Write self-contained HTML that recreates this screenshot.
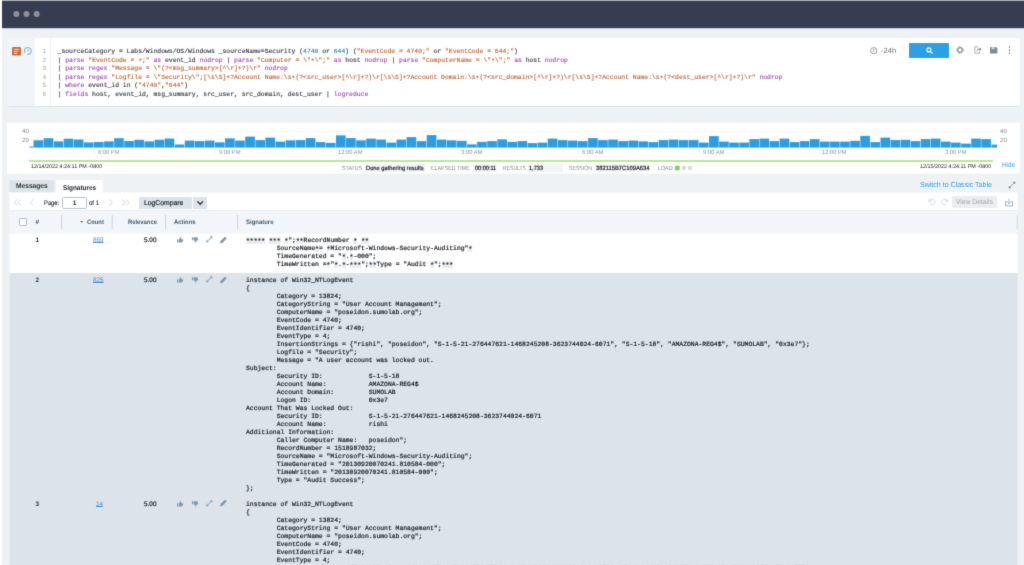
<!DOCTYPE html>
<html lang="en"><head><meta charset="utf-8"><title>Sumo Logic - LogReduce Signatures</title>
<style>
html,body{margin:0;padding:0;width:1024px;height:565px;overflow:hidden;background:#fff}
#clip{position:relative;width:1024px;height:565px;overflow:hidden;background:#fff;font-family:"Liberation Sans",sans-serif}
#root{text-rendering:geometricPrecision;position:absolute;left:0;top:0;width:1044px;height:585px;overflow:hidden;background:#eef2f5;filter:url(#soft)}
.b{position:absolute}
.t{position:absolute;white-space:pre;font-family:"Liberation Sans",sans-serif}
.m{position:absolute;white-space:pre;font-family:"Liberation Mono",monospace}
pre{margin:0;position:absolute;-webkit-text-stroke:0.22px;font-family:"Liberation Mono",monospace;white-space:pre;tab-size:8;-moz-tab-size:8}
svg{position:absolute;overflow:visible}
.k{color:#a040b8}.s{color:#bf6030}.n{color:#2a7fb8}
a{color:inherit}
.a{position:relative;top:1.2px}
</style></head><body><div id="clip"><div id="root">
<svg width="0" height="0" style="position:absolute"><defs><filter id="soft" x="0" y="0" width="100%" height="100%" color-interpolation-filters="sRGB"><feConvolveMatrix order="3" kernelMatrix="0.02 0.085 0.02 0.085 0.58 0.085 0.02 0.085 0.02" edgeMode="duplicate" preserveAlpha="true"/></filter></defs></svg>
<svg style="left:0px;top:0px" width="1044" height="1"><rect x="0.00" y="0.00" width="1044.00" height="1.00" fill="#b4b6be"/></svg>
<svg style="left:0px;top:1px" width="1044" height="28"><rect x="0.00" y="0.00" width="1044.00" height="27.20" fill="#373d51"/></svg>
<svg style="left:0px;top:0px" width="2" height="565"><rect x="0.00" y="0.00" width="2.00" height="565.00" fill="#ffffff"/></svg>
<svg style="left:0;top:0" width="60" height="28" viewBox="0 0 60 28"><circle cx="16.4" cy="14.1" r="3" fill="#8f9092"/><circle cx="26.45" cy="14.1" r="3" fill="#8f9092"/><circle cx="36.6" cy="14.1" r="3" fill="#8f9092"/></svg>
<div class="b" style="left:6.80px;top:37.90px;width:1013.20px;height:67.90px;background:#ffffff;box-shadow:0 0.6px 1px rgba(60,80,100,0.10)"></div>
<svg style="left:6px;top:37px" width="29" height="69"><rect x="0.80" y="0.90" width="28.00" height="67.90" fill="#f1f5f9"/></svg>
<svg style="left:50px;top:37px" width="1" height="69"><rect x="0.30" y="0.90" width="0.70" height="67.90" fill="#e6eaee"/></svg>
<svg style="left:12.2px;top:46.9px" width="9" height="8.6" viewBox="0 0 9 8.6"><rect x="0" y="0" width="9" height="8.6" rx="1.2" fill="#c9693a"/><rect x="1.8" y="1.8" width="5.4" height="1" fill="#f3d9c9"/><rect x="1.8" y="3.8" width="4.4" height="1" fill="#f3d9c9"/><rect x="1.8" y="5.8" width="3.4" height="1" fill="#f3d9c9"/></svg>
<svg style="left:24px;top:47px" width="8" height="8" viewBox="0 0 8 8"><path d="M1.3 6.2A3.4 3.4 0 1 1 3.2 7.3" fill="none" stroke="#8fb0c8" stroke-width="1.1"/><path d="M4 2.2V4.2L5.2 3.4" fill="none" stroke="#8fb0c8" stroke-width="0.8"/></svg>
<pre style="left:42.6px;top:48px;font-size:6.39px;line-height:8px;color:#a4a9b0;-webkit-text-stroke:0">1</pre>
<pre style="left:42.6px;top:57px;font-size:6.39px;line-height:8px;color:#a4a9b0;-webkit-text-stroke:0">2</pre>
<pre style="left:42.6px;top:65px;font-size:6.39px;line-height:8px;color:#a4a9b0;-webkit-text-stroke:0">3</pre>
<pre style="left:42.6px;top:74px;font-size:6.39px;line-height:8px;color:#a4a9b0;-webkit-text-stroke:0">4</pre>
<pre style="left:42.6px;top:82px;font-size:6.39px;line-height:8px;color:#a4a9b0;-webkit-text-stroke:0">5</pre>
<pre style="left:42.6px;top:91px;font-size:6.39px;line-height:8px;color:#a4a9b0;-webkit-text-stroke:0">6</pre>
<pre style="left:57.6px;top:48px;font-size:6.4px;line-height:8px;color:#2e3338;-webkit-text-stroke:0.12px">_sourceCategory = Labs/Windows/OS/Windows _sourceName=Security (<span class="n">4740</span> or <span class="n">644</span>) (<span class="s">"EventCode = 4740;"</span> or <span class="s">"EventCode = 644;"</span>)</pre>
<pre style="left:57.6px;top:57px;font-size:6.4px;line-height:8px;color:#2e3338;-webkit-text-stroke:0.12px">| <span class="k">parse</span> <span class="s">"EventCode = <span class="a">*</span>;"</span> <span class="k">as</span> event_id <span class="k">nodrop</span> | <span class="k">parse</span> <span class="s">"Computer = \"<span class="a">*</span>\";"</span> <span class="k">as</span> host <span class="k">nodrop</span> | <span class="k">parse</span> <span class="s">"ComputerName = \"<span class="a">*</span>\";"</span> <span class="k">as</span> host <span class="k">nodrop</span></pre>
<pre style="left:57.6px;top:65px;font-size:6.4px;line-height:8px;color:#2e3338;-webkit-text-stroke:0.12px">| <span class="k">parse regex</span> <span class="s">"Message = \"(?&lt;msg_summary&gt;[^\r]+?)\r"</span> <span class="k">nodrop</span></pre>
<pre style="left:57.6px;top:74px;font-size:6.4px;line-height:8px;color:#2e3338;-webkit-text-stroke:0.12px">| <span class="k">parse regex</span> <span class="s">"Logfile = \"Security\";[\s\S]+?Account Name:\s+(?&lt;src_user&gt;[^\r]+?)\r[\s\S]+?Account Domain:\s+(?&lt;src_domain&gt;[^\r]+?)\r[\s\S]+?Account Name:\s+(?&lt;dest_user&gt;[^\r]+?)\r"</span> <span class="k">nodrop</span></pre>
<pre style="left:57.6px;top:82px;font-size:6.4px;line-height:8px;color:#2e3338;-webkit-text-stroke:0.12px">| <span class="k">where</span> event_id in (<span class="s">"4740"</span>,<span class="s">"644"</span>)</pre>
<pre style="left:57.6px;top:91px;font-size:6.4px;line-height:8px;color:#2e3338;-webkit-text-stroke:0.12px">| <span class="k">fields</span> host, event_id, msg_summary, src_user, src_domain, dest_user | <span class="k">logreduce</span></pre>
<svg style="left:870px;top:46.6px" width="7.4" height="7.4" viewBox="0 0 7.4 7.4"><circle cx="3.7" cy="3.7" r="3.1" fill="none" stroke="#75838f" stroke-width="0.8"/><path d="M3.7 1.8V3.9L2.5 4.6" fill="none" stroke="#75838f" stroke-width="0.7"/></svg>
<span class="t" style="left:881.00px;top:46px;font-size:7.4px;line-height:10px;color:#66727e;transform:scaleX(1.0398);transform-origin:0 50%;">-24h</span>
<div class="b" style="left:909.30px;top:43.20px;width:40.00px;height:14.80px;background:#2c9fe5;border-radius:0.8px"></div>
<svg style="left:925.5px;top:46.7px" width="7" height="7" viewBox="0 0 7 7"><circle cx="2.9" cy="2.9" r="2" fill="none" stroke="#fff" stroke-width="1.1"/><path d="M4.4 4.4L6.2 6.2" stroke="#fff" stroke-width="1.2" stroke-linecap="round"/></svg>
<svg style="left:955.6px;top:46px" width="8" height="8" viewBox="0 0 8 8"><circle cx="4" cy="4" r="2.3" fill="none" stroke="#65727f" stroke-width="1"/><circle cx="4" cy="4" r="3.2" fill="none" stroke="#65727f" stroke-width="0.9" stroke-dasharray="1.3 1.29"/></svg>
<svg style="left:974.4px;top:46px" width="8" height="8" viewBox="0 0 8 8"><path d="M4.2 0.9H0.8V7.2H5.6V5.2" fill="none" stroke="#8fa0ae" stroke-width="0.8"/><path d="M2.6 5.6C2.8 3.6 4 2.6 5.6 2.6V1.4L7.6 3.2L5.6 5V3.8C4.4 3.8 3.4 4.4 2.6 5.6Z" fill="#6f8496"/></svg>
<svg style="left:990.2px;top:46.6px" width="7.4" height="7" viewBox="0 0 7.4 7"><path d="M0 0H6L7.4 1.2V6.6H0Z" fill="#788b9e"/><rect x="1.6" y="0" width="3.6" height="2.2" fill="#d5dde4"/><rect x="3.8" y="0.4" width="0.9" height="1.4" fill="#788b9e"/></svg>
<div class="b" style="left:1008.50px;top:46.35px;width:1.70px;height:1.70px;background:#6f7c89;border-radius:50%"></div>
<div class="b" style="left:1008.50px;top:49.35px;width:1.70px;height:1.70px;background:#6f7c89;border-radius:50%"></div>
<div class="b" style="left:1008.50px;top:52.35px;width:1.70px;height:1.70px;background:#6f7c89;border-radius:50%"></div>
<svg style="left:6px;top:122px" width="1015" height="52"><rect x="0.80" y="0.70" width="1013.40" height="50.90" fill="#ffffff"/></svg>
<span class="t" style="left:21.50px;top:127px;font-size:6.2px;line-height:9px;color:#858a91;transform:scaleX(0.9860);transform-origin:0 50%;">40</span>
<span class="t" style="left:1000.00px;top:127px;font-size:6.2px;line-height:9px;color:#858a91;transform:scaleX(0.9860);transform-origin:0 50%;">40</span>
<span class="t" style="left:21.50px;top:136px;font-size:6.2px;line-height:9px;color:#858a91;transform:scaleX(0.9860);transform-origin:0 50%;">20</span>
<span class="t" style="left:1000.00px;top:136px;font-size:6.2px;line-height:9px;color:#858a91;transform:scaleX(0.9860);transform-origin:0 50%;">20</span>
<svg style="left:29px;top:131px" width="968" height="1"><rect x="0.50" y="0.00" width="967.50" height="0.50" fill="#e9ecef"/></svg>
<svg style="left:29px;top:139px" width="968" height="1"><rect x="0.50" y="0.20" width="967.50" height="0.40" fill="#f1f3f5"/></svg>
<svg style="left:0;top:0" width="1024" height="200" viewBox="0 0 1024 200"><rect x="29.5" y="146.50" width="3.7" height="1.1" fill="#2b9de2"/><rect x="33.50" y="140.30" width="9.63" height="7.30" fill="#2b9de2"/><rect x="43.58" y="138.20" width="9.63" height="9.40" fill="#2b9de2"/><rect x="53.67" y="141.35" width="9.63" height="6.25" fill="#2b9de2"/><rect x="63.75" y="138.70" width="9.63" height="8.90" fill="#2b9de2"/><rect x="73.83" y="139.50" width="9.63" height="8.10" fill="#2b9de2"/><rect x="83.91" y="142.40" width="9.63" height="5.20" fill="#2b9de2"/><rect x="94.00" y="142.00" width="9.63" height="5.60" fill="#2b9de2"/><rect x="104.08" y="141.35" width="9.63" height="6.25" fill="#2b9de2"/><rect x="114.16" y="138.20" width="9.63" height="9.40" fill="#2b9de2"/><rect x="124.25" y="141.00" width="9.63" height="6.60" fill="#2b9de2"/><rect x="134.33" y="139.80" width="9.63" height="7.80" fill="#2b9de2"/><rect x="144.41" y="141.35" width="9.63" height="6.25" fill="#2b9de2"/><rect x="154.50" y="139.80" width="9.63" height="7.80" fill="#2b9de2"/><rect x="164.58" y="138.50" width="9.63" height="9.10" fill="#2b9de2"/><rect x="174.66" y="144.50" width="9.63" height="3.10" fill="#2b9de2"/><rect x="184.75" y="140.60" width="9.63" height="7.00" fill="#2b9de2"/><rect x="194.83" y="141.10" width="9.63" height="6.50" fill="#2b9de2"/><rect x="204.91" y="140.60" width="9.63" height="7.00" fill="#2b9de2"/><rect x="214.99" y="142.35" width="9.63" height="5.25" fill="#2b9de2"/><rect x="225.08" y="138.35" width="9.63" height="9.25" fill="#2b9de2"/><rect x="235.16" y="140.60" width="9.63" height="7.00" fill="#2b9de2"/><rect x="245.24" y="136.60" width="9.63" height="11.00" fill="#2b9de2"/><rect x="255.33" y="140.10" width="9.63" height="7.50" fill="#2b9de2"/><rect x="265.41" y="137.60" width="9.63" height="10.00" fill="#2b9de2"/><rect x="275.49" y="141.60" width="9.63" height="6.00" fill="#2b9de2"/><rect x="285.58" y="140.35" width="9.63" height="7.25" fill="#2b9de2"/><rect x="295.66" y="140.10" width="9.63" height="7.50" fill="#2b9de2"/><rect x="305.74" y="138.10" width="9.63" height="9.50" fill="#2b9de2"/><rect x="315.82" y="142.10" width="9.63" height="5.50" fill="#2b9de2"/><rect x="325.91" y="142.85" width="9.63" height="4.75" fill="#2b9de2"/><rect x="335.99" y="135.35" width="9.63" height="12.25" fill="#2b9de2"/><rect x="346.07" y="138.10" width="9.63" height="9.50" fill="#2b9de2"/><rect x="356.16" y="140.35" width="9.63" height="7.25" fill="#2b9de2"/><rect x="366.24" y="138.60" width="9.63" height="9.00" fill="#2b9de2"/><rect x="376.32" y="139.60" width="9.63" height="8.00" fill="#2b9de2"/><rect x="386.41" y="142.60" width="9.63" height="5.00" fill="#2b9de2"/><rect x="396.49" y="139.60" width="9.63" height="8.00" fill="#2b9de2"/><rect x="406.57" y="137.10" width="9.63" height="10.50" fill="#2b9de2"/><rect x="416.65" y="141.10" width="9.63" height="6.50" fill="#2b9de2"/><rect x="426.74" y="135.10" width="9.63" height="12.50" fill="#2b9de2"/><rect x="436.82" y="139.60" width="9.63" height="8.00" fill="#2b9de2"/><rect x="446.90" y="140.35" width="9.63" height="7.25" fill="#2b9de2"/><rect x="456.99" y="140.85" width="9.63" height="6.75" fill="#2b9de2"/><rect x="467.07" y="144.35" width="9.63" height="3.25" fill="#2b9de2"/><rect x="477.15" y="141.85" width="9.63" height="5.75" fill="#2b9de2"/><rect x="487.24" y="141.10" width="9.63" height="6.50" fill="#2b9de2"/><rect x="497.32" y="139.35" width="9.63" height="8.25" fill="#2b9de2"/><rect x="507.40" y="141.85" width="9.63" height="5.75" fill="#2b9de2"/><rect x="517.48" y="141.10" width="9.63" height="6.50" fill="#2b9de2"/><rect x="527.57" y="143.10" width="9.63" height="4.50" fill="#2b9de2"/><rect x="537.65" y="142.60" width="9.63" height="5.00" fill="#2b9de2"/><rect x="547.73" y="138.60" width="9.63" height="9.00" fill="#2b9de2"/><rect x="557.82" y="140.10" width="9.63" height="7.50" fill="#2b9de2"/><rect x="567.90" y="140.60" width="9.63" height="7.00" fill="#2b9de2"/><rect x="577.98" y="141.10" width="9.63" height="6.50" fill="#2b9de2"/><rect x="588.07" y="138.10" width="9.63" height="9.50" fill="#2b9de2"/><rect x="598.15" y="140.10" width="9.63" height="7.50" fill="#2b9de2"/><rect x="608.23" y="139.60" width="9.63" height="8.00" fill="#2b9de2"/><rect x="618.31" y="141.10" width="9.63" height="6.50" fill="#2b9de2"/><rect x="628.40" y="140.60" width="9.63" height="7.00" fill="#2b9de2"/><rect x="638.48" y="141.35" width="9.63" height="6.25" fill="#2b9de2"/><rect x="648.56" y="142.10" width="9.63" height="5.50" fill="#2b9de2"/><rect x="658.65" y="140.10" width="9.63" height="7.50" fill="#2b9de2"/><rect x="668.73" y="139.60" width="9.63" height="8.00" fill="#2b9de2"/><rect x="678.81" y="140.10" width="9.63" height="7.50" fill="#2b9de2"/><rect x="688.89" y="140.10" width="9.63" height="7.50" fill="#2b9de2"/><rect x="698.98" y="142.60" width="9.63" height="5.00" fill="#2b9de2"/><rect x="709.06" y="136.10" width="9.63" height="11.50" fill="#2b9de2"/><rect x="719.14" y="141.60" width="9.63" height="6.00" fill="#2b9de2"/><rect x="729.23" y="142.60" width="9.63" height="5.00" fill="#2b9de2"/><rect x="739.31" y="142.60" width="9.63" height="5.00" fill="#2b9de2"/><rect x="749.39" y="139.10" width="9.63" height="8.50" fill="#2b9de2"/><rect x="759.48" y="138.60" width="9.63" height="9.00" fill="#2b9de2"/><rect x="769.56" y="141.10" width="9.63" height="6.50" fill="#2b9de2"/><rect x="779.64" y="138.60" width="9.63" height="9.00" fill="#2b9de2"/><rect x="789.73" y="142.10" width="9.63" height="5.50" fill="#2b9de2"/><rect x="799.81" y="141.10" width="9.63" height="6.50" fill="#2b9de2"/><rect x="809.89" y="139.10" width="9.63" height="8.50" fill="#2b9de2"/><rect x="819.97" y="141.60" width="9.63" height="6.00" fill="#2b9de2"/><rect x="830.06" y="141.60" width="9.63" height="6.00" fill="#2b9de2"/><rect x="840.14" y="141.60" width="9.63" height="6.00" fill="#2b9de2"/><rect x="850.22" y="140.85" width="9.63" height="6.75" fill="#2b9de2"/><rect x="860.31" y="135.85" width="9.63" height="11.75" fill="#2b9de2"/><rect x="870.39" y="142.10" width="9.63" height="5.50" fill="#2b9de2"/><rect x="880.47" y="137.60" width="9.63" height="10.00" fill="#2b9de2"/><rect x="890.56" y="140.10" width="9.63" height="7.50" fill="#2b9de2"/><rect x="900.64" y="139.85" width="9.63" height="7.75" fill="#2b9de2"/><rect x="910.72" y="141.10" width="9.63" height="6.50" fill="#2b9de2"/><rect x="920.80" y="139.10" width="9.63" height="8.50" fill="#2b9de2"/><rect x="930.89" y="138.60" width="9.63" height="9.00" fill="#2b9de2"/><rect x="940.97" y="141.60" width="9.63" height="6.00" fill="#2b9de2"/><rect x="951.05" y="142.60" width="9.63" height="5.00" fill="#2b9de2"/><rect x="961.14" y="143.60" width="9.63" height="4.00" fill="#2b9de2"/><rect x="971.22" y="138.60" width="9.63" height="9.00" fill="#2b9de2"/><rect x="981.30" y="139.10" width="9.63" height="8.50" fill="#2b9de2"/><rect x="991.38" y="144.60" width="5.62" height="3" fill="#2b9de2"/></svg>
<svg style="left:94px;top:148px" width="1" height="6"><rect x="0.30" y="0.80" width="0.60" height="5.00" fill="#e4e7ea"/></svg>
<span class="t" style="left:97.60px;top:149px;font-size:6px;line-height:8px;color:#8d9298;transform:scaleX(0.9622);transform-origin:0 50%;">6:00 PM</span>
<svg style="left:215px;top:148px" width="1" height="6"><rect x="0.30" y="0.80" width="0.60" height="5.00" fill="#e4e7ea"/></svg>
<span class="t" style="left:218.60px;top:149px;font-size:6px;line-height:8px;color:#8d9298;transform:scaleX(0.9622);transform-origin:0 50%;">9:00 PM</span>
<svg style="left:336px;top:148px" width="1" height="6"><rect x="0.30" y="0.80" width="0.60" height="5.00" fill="#e4e7ea"/></svg>
<span class="t" style="left:338.00px;top:149px;font-size:6px;line-height:8px;color:#8d9298;transform:scaleX(0.9704);transform-origin:0 50%;">12:00 AM</span>
<svg style="left:457px;top:148px" width="1" height="6"><rect x="0.30" y="0.80" width="0.60" height="5.00" fill="#e4e7ea"/></svg>
<span class="t" style="left:460.60px;top:149px;font-size:6px;line-height:8px;color:#8d9298;transform:scaleX(0.9767);transform-origin:0 50%;">3:00 AM</span>
<svg style="left:578px;top:148px" width="1" height="6"><rect x="0.30" y="0.80" width="0.60" height="5.00" fill="#e4e7ea"/></svg>
<span class="t" style="left:581.60px;top:149px;font-size:6px;line-height:8px;color:#8d9298;transform:scaleX(0.9767);transform-origin:0 50%;">6:00 AM</span>
<svg style="left:699px;top:148px" width="1" height="6"><rect x="0.30" y="0.80" width="0.60" height="5.00" fill="#e4e7ea"/></svg>
<span class="t" style="left:702.60px;top:149px;font-size:6px;line-height:8px;color:#8d9298;transform:scaleX(0.9767);transform-origin:0 50%;">9:00 AM</span>
<svg style="left:820px;top:148px" width="1" height="6"><rect x="0.30" y="0.80" width="0.60" height="5.00" fill="#e4e7ea"/></svg>
<span class="t" style="left:822.00px;top:149px;font-size:6px;line-height:8px;color:#8d9298;transform:scaleX(0.9579);transform-origin:0 50%;">12:00 PM</span>
<svg style="left:941px;top:148px" width="1" height="6"><rect x="0.30" y="0.80" width="0.60" height="5.00" fill="#e4e7ea"/></svg>
<span class="t" style="left:944.60px;top:149px;font-size:6px;line-height:8px;color:#8d9298;transform:scaleX(0.9622);transform-origin:0 50%;">3:00 PM</span>
<svg style="left:29px;top:160px" width="964" height="2"><rect x="0.00" y="0.30" width="964.00" height="1.40" fill="#a6d672"/></svg>
<span class="t" style="left:31.20px;top:163px;font-size:5.4px;line-height:8px;color:#181c21;transform:scaleX(1.0035);transform-origin:0 50%;">12/14/2022 4:24:11 PM -0800</span>
<span class="t" style="left:919.80px;top:163px;font-size:5.4px;line-height:8px;color:#181c21;transform:scaleX(1.0035);transform-origin:0 50%;">12/15/2022 4:24:11 PM -0800</span>
<span class="t" style="left:1001.80px;top:161px;font-size:7px;line-height:10px;color:#2d9fe3;transform:scaleX(0.9030);transform-origin:0 50%;">Hide</span>
<span class="t" style="left:341.80px;top:165px;font-size:6px;line-height:8px;color:#808891;transform:scaleX(0.8868);transform-origin:0 50%;">STATUS</span>
<svg style="left:364px;top:163px" width="62" height="10"><rect x="0.80" y="0.70" width="60.70" height="8.40" fill="#f1f4f8"/></svg>
<span class="t" style="left:366.40px;top:165px;font-size:6px;line-height:8px;color:#181c21;-webkit-text-stroke:0.18px;transform:scaleX(0.9541);transform-origin:0 50%;">Done gathering results</span>
<span class="t" style="left:431.00px;top:165px;font-size:6px;line-height:8px;color:#808891;transform:scaleX(0.8882);transform-origin:0 50%;">ELAPSED TIME</span>
<svg style="left:473px;top:163px" width="24" height="10"><rect x="0.00" y="0.70" width="24.00" height="8.40" fill="#f1f4f8"/></svg>
<span class="t" style="left:474.60px;top:165px;font-size:6px;line-height:8px;color:#181c21;-webkit-text-stroke:0.18px;transform:scaleX(0.9254);transform-origin:0 50%;">00:00:11</span>
<span class="t" style="left:503.00px;top:165px;font-size:6px;line-height:8px;color:#808891;transform:scaleX(0.8447);transform-origin:0 50%;">RESULTS</span>
<svg style="left:527px;top:163px" width="36" height="10"><rect x="0.50" y="0.70" width="35.50" height="8.40" fill="#f1f4f8"/></svg>
<span class="t" style="left:529.10px;top:165px;font-size:6px;line-height:8px;color:#181c21;-webkit-text-stroke:0.18px;transform:scaleX(0.9324);transform-origin:0 50%;">1,733</span>
<span class="t" style="left:569.00px;top:165px;font-size:6px;line-height:8px;color:#808891;transform:scaleX(0.8622);transform-origin:0 50%;">SESSION</span>
<svg style="left:594px;top:163px" width="57" height="10"><rect x="0.50" y="0.70" width="56.20" height="8.40" fill="#f1f4f8"/></svg>
<span class="t" style="left:596.10px;top:165px;font-size:6px;line-height:8px;color:#181c21;-webkit-text-stroke:0.18px;transform:scaleX(0.9679);transform-origin:0 50%;">382115B7C109A634</span>
<span class="t" style="left:658.00px;top:165px;font-size:6px;line-height:8px;color:#808891;transform:scaleX(0.8875);transform-origin:0 50%;">LOAD</span>
<svg style="left:670px;top:160px" width="30" height="16" viewBox="0 0 30 16"><circle cx="7.3" cy="7.90" r="2.5" fill="#8cc751"/><circle cx="13.9" cy="7.90" r="2.2" fill="#d2dae2"/><circle cx="19.9" cy="7.90" r="2.2" fill="#d2dae2"/></svg>
<svg style="left:9px;top:180px" width="46" height="13"><rect x="0.50" y="0.20" width="44.60" height="12.40" fill="#dce3ea"/></svg>
<svg style="left:56px;top:179px" width="47" height="14"><rect x="0.20" y="0.90" width="46.40" height="12.70" fill="#ffffff"/></svg>
<span class="t" style="left:15.80px;top:182px;font-size:7px;line-height:10px;color:#2b3036;font-weight:700;transform:scaleX(0.9472);transform-origin:0 50%;">Messages</span>
<span class="t" style="left:63.00px;top:184px;font-size:7px;line-height:10px;color:#1d2126;font-weight:700;transform:scaleX(0.9122);transform-origin:0 50%;">Signatures</span>
<span class="t" style="left:919.80px;top:180px;font-size:7.4px;line-height:10px;color:#2d9fe3;transform:scaleX(0.9531);transform-origin:0 50%;">Switch to Classic Table</span>
<svg style="left:1008px;top:181px" width="8" height="8" viewBox="0 0 8 8"><path d="M1.2 6.8L6.8 1.2" stroke="#6a7885" stroke-width="0.7"/><path d="M4.8 0.8H7.2V3.2Z M0.8 4.8V7.2H3.2Z" fill="#6a7885"/></svg>
<svg style="left:9px;top:192px" width="1009" height="19"><rect x="0.50" y="0.50" width="1008.25" height="17.90" fill="#ffffff"/></svg>
<svg style="left:14.2px;top:199.0px" width="8" height="7" viewBox="0 0 8 7"><path d="M3.40 0.3L0.30 3.5L3.40 6.7 M7.10 0.3L4.00 3.5L7.10 6.7" fill="none" stroke="#c8d0d7" stroke-width="0.9"/></svg>
<svg style="left:30.4px;top:199.0px" width="8" height="7" viewBox="0 0 8 7"><path d="M3.40 0.3L0.30 3.5L3.40 6.7" fill="none" stroke="#c8d0d7" stroke-width="0.9"/></svg>
<span class="t" style="left:43.80px;top:199px;font-size:6.6px;line-height:9px;color:#2b3036;-webkit-text-stroke:0.15px;transform:scaleX(0.8813);transform-origin:0 50%;">Page:</span>
<div class="b" style="left:61.50px;top:196.50px;width:25.30px;height:12.00px;background:#fff;border:0.8px solid #b9c0c7;border-radius:1.6px;box-sizing:border-box"></div>
<span class="t" style="left:72.80px;top:199px;font-size:6.6px;line-height:9px;color:#2b3036;font-weight:700;">1</span>
<span class="t" style="left:89.00px;top:199px;font-size:6.6px;line-height:9px;color:#2b3036;-webkit-text-stroke:0.15px;transform:scaleX(0.9084);transform-origin:0 50%;">of 1</span>
<svg style="left:108.9px;top:199.0px" width="8" height="7" viewBox="0 0 8 7"><path d="M0.30 0.3L3.40 3.5L0.30 6.7" fill="none" stroke="#c8d0d7" stroke-width="0.9"/></svg>
<svg style="left:121.5px;top:199.0px" width="8" height="7" viewBox="0 0 8 7"><path d="M0.30 0.3L3.40 3.5L0.30 6.7 M4.00 0.3L7.10 3.5L4.00 6.7" fill="none" stroke="#c8d0d7" stroke-width="0.9"/></svg>
<div class="b" style="left:138.50px;top:196.50px;width:53.00px;height:12.00px;background:#dce3ea;border-radius:0.8px"></div>
<span class="t" style="left:143.80px;top:199px;font-size:6.9px;line-height:9px;color:#23282e;-webkit-text-stroke:0.2px;transform:scaleX(0.9852);transform-origin:0 50%;">LogCompare</span>
<div class="b" style="left:193.00px;top:196.50px;width:13.60px;height:12.00px;background:#dce3ea;border-radius:0.8px"></div>
<svg style="left:196.6px;top:200.5px" width="6.4" height="4" viewBox="0 0 6.4 4"><path d="M0.4 0.4L3.2 3.3L6 0.4" fill="none" stroke="#22272c" stroke-width="1.25"/></svg>
<svg style="left:927.6px;top:198.3px" width="7.6" height="7.6" viewBox="0 0 7 7"><path d="M1.2 3A2.6 2.6 0 1 1 2 5.6" fill="none" stroke="#c9d0d6" stroke-width="0.7"/><path d="M0.2 1.2L1.2 3.4L3.2 2.4" fill="none" stroke="#c9d0d6" stroke-width="0.7"/></svg>
<svg style="left:940.8px;top:198.3px" width="7.6" height="7.6" viewBox="0 0 7 7"><path d="M5.8 3A2.6 2.6 0 1 0 5 5.6" fill="none" stroke="#c9d0d6" stroke-width="0.7"/><path d="M6.8 1.2L5.8 3.4L3.8 2.4" fill="none" stroke="#c9d0d6" stroke-width="0.7"/></svg>
<div class="b" style="left:952.20px;top:196.20px;width:45.10px;height:12.20px;background:#ecedef;border-radius:0.8px"></div>
<span class="t" style="left:955.70px;top:198px;font-size:6.9px;line-height:9px;color:#a0a6ad;transform:scaleX(0.9778);transform-origin:0 50%;">View Details</span>
<svg style="left:1005.3px;top:198.8px" width="8" height="7.4" viewBox="0 0 8 7.4"><path d="M2.2 2.6H0.5V6.9H7.5V2.6H5.8" fill="none" stroke="#7690a5" stroke-width="0.7"/><path d="M4 0V4.6M2.4 3.2L4 4.8L5.6 3.2" fill="none" stroke="#7690a5" stroke-width="0.7"/></svg>
<svg style="left:9px;top:210px" width="1009" height="24"><rect x="0.60" y="0.40" width="1008.15" height="23.10" fill="#f2f5f9"/></svg>
<svg style="left:9px;top:210px" width="1009" height="1"><rect x="0.60" y="0.30" width="1008.15" height="0.70" fill="#e4e9ef"/></svg>
<svg style="left:9px;top:233px" width="1009" height="41"><rect x="0.60" y="0.60" width="1008.15" height="39.50" fill="#ffffff"/></svg>
<svg style="left:9px;top:273px" width="1009" height="321"><rect x="0.60" y="0.10" width="1008.15" height="320.00" fill="#dde3eb"/></svg>
<div class="b" style="left:18.60px;top:218.10px;width:8.20px;height:8.20px;background:#fff;border:0.8px solid #a9bccb;border-radius:1.2px;box-sizing:border-box"></div>
<span class="t" style="left:35.40px;top:218px;font-size:6.4px;line-height:9px;color:#3c5a73;font-weight:700;">#</span>
<svg style="left:61px;top:215px" width="2" height="14"><rect x="0.40" y="0.00" width="0.70" height="14.00" fill="#bcc7d1"/></svg>
<svg style="left:111px;top:215px" width="2" height="14"><rect x="0.80" y="0.00" width="0.70" height="14.00" fill="#bcc7d1"/></svg>
<svg style="left:165px;top:215px" width="1" height="14"><rect x="0.20" y="0.00" width="0.70" height="14.00" fill="#bcc7d1"/></svg>
<svg style="left:237px;top:215px" width="1" height="14"><rect x="0.30" y="0.00" width="0.70" height="14.00" fill="#bcc7d1"/></svg>
<svg style="left:1016px;top:215px" width="2" height="14"><rect x="0.80" y="0.00" width="0.70" height="14.00" fill="#bcc7d1"/></svg>
<svg style="left:79.7px;top:221.0px" width="3.4" height="2" viewBox="0 0 3.4 2"><path d="M0 0H3.4L1.7 2Z" fill="#6a7f90"/></svg>
<span class="t" style="left:86.80px;top:218px;font-size:6.4px;line-height:9px;color:#3c5a73;font-weight:700;transform:scaleX(0.9144);transform-origin:0 50%;">Count</span>
<span class="t" style="left:128.00px;top:218px;font-size:6.4px;line-height:9px;color:#3c5a73;font-weight:700;transform:scaleX(0.9158);transform-origin:0 50%;">Relevance</span>
<span class="t" style="left:174.00px;top:218px;font-size:6.4px;line-height:9px;color:#3c5a73;font-weight:700;transform:scaleX(0.9161);transform-origin:0 50%;">Actions</span>
<span class="t" style="left:246.00px;top:218px;font-size:6.4px;line-height:9px;color:#3c5a73;font-weight:700;transform:scaleX(0.9317);transform-origin:0 50%;">Signature</span>
<span class="t" style="left:35.60px;top:236px;font-size:6.4px;line-height:9px;color:#33383e;font-weight:700;">1</span>
<span class="t" style="left:92.50px;top:236px;font-size:6.7px;line-height:9px;color:#3f93c8;transform:scaleX(0.9482);transform-origin:0 50%;text-decoration:underline;text-decoration-thickness:0.45px;text-underline-offset:0.2px">869</span>
<span class="t" style="left:144.00px;top:236px;font-size:6.5px;line-height:9px;color:#1b1f24;-webkit-text-stroke:0.2px;transform:scaleX(0.9881);transform-origin:0 50%;">5.00</span>
<svg style="left:177.2px;top:236.80px" width="6.2" height="5.6" viewBox="0 0 6.2 5.6"><rect x="0" y="2.4" width="1.5" height="3" fill="#7f9bb1"/><path d="M2 5.4V2.6L3.6 0C4.6 0 4.6 1 4.2 2.2H6C6.3 2.2 6.2 2.8 6.1 3.2L5.5 5C5.4 5.3 5.2 5.4 4.9 5.4Z" fill="#7f9bb1"/></svg>
<svg style="left:191.8px;top:237.00px" width="6.2" height="5.6" viewBox="0 0 6.2 5.6"><g transform="translate(0,5.6) scale(1,-1)"><rect x="0" y="2.4" width="1.5" height="3" fill="#7f9bb1"/><path d="M2 5.4V2.6L3.6 0C4.6 0 4.6 1 4.2 2.2H6C6.3 2.2 6.2 2.8 6.1 3.2L5.5 5C5.4 5.3 5.2 5.4 4.9 5.4Z" fill="#7f9bb1"/></g></svg>
<svg style="left:205.9px;top:236.40px" width="6.6" height="6.6" viewBox="0 0 6.6 6.6"><path d="M1.2 5.4L5.4 1.2" stroke="#7f9bb1" stroke-width="1"/><path d="M3.7 0.3H6.3V2.9Z M0.3 3.7V6.3H2.9Z" fill="#7f9bb1"/></svg>
<svg style="left:220.2px;top:236.60px" width="6.4" height="6.2" viewBox="0 0 6.4 6.2"><path d="M0 6.2L0.5 4.1L4.4 0.2C4.8 -0.2 5.4 -0.2 5.8 0.2L6.2 0.6C6.6 1 6.6 1.6 6.2 2L2.3 5.9Z" fill="#7f9bb1"/></svg>
<span class="t" style="left:35.60px;top:276px;font-size:6.4px;line-height:9px;color:#33383e;font-weight:700;">2</span>
<span class="t" style="left:92.50px;top:276px;font-size:6.7px;line-height:9px;color:#3f93c8;transform:scaleX(0.9482);transform-origin:0 50%;text-decoration:underline;text-decoration-thickness:0.45px;text-underline-offset:0.2px">825</span>
<span class="t" style="left:144.00px;top:276px;font-size:6.5px;line-height:9px;color:#1b1f24;-webkit-text-stroke:0.2px;transform:scaleX(0.9881);transform-origin:0 50%;">5.00</span>
<svg style="left:177.2px;top:276.80px" width="6.2" height="5.6" viewBox="0 0 6.2 5.6"><rect x="0" y="2.4" width="1.5" height="3" fill="#7f9bb1"/><path d="M2 5.4V2.6L3.6 0C4.6 0 4.6 1 4.2 2.2H6C6.3 2.2 6.2 2.8 6.1 3.2L5.5 5C5.4 5.3 5.2 5.4 4.9 5.4Z" fill="#7f9bb1"/></svg>
<svg style="left:191.8px;top:277.00px" width="6.2" height="5.6" viewBox="0 0 6.2 5.6"><g transform="translate(0,5.6) scale(1,-1)"><rect x="0" y="2.4" width="1.5" height="3" fill="#7f9bb1"/><path d="M2 5.4V2.6L3.6 0C4.6 0 4.6 1 4.2 2.2H6C6.3 2.2 6.2 2.8 6.1 3.2L5.5 5C5.4 5.3 5.2 5.4 4.9 5.4Z" fill="#7f9bb1"/></g></svg>
<svg style="left:205.9px;top:276.40px" width="6.6" height="6.6" viewBox="0 0 6.6 6.6"><path d="M1.2 5.4L5.4 1.2" stroke="#7f9bb1" stroke-width="1"/><path d="M3.7 0.3H6.3V2.9Z M0.3 3.7V6.3H2.9Z" fill="#7f9bb1"/></svg>
<svg style="left:220.2px;top:276.60px" width="6.4" height="6.2" viewBox="0 0 6.4 6.2"><path d="M0 6.2L0.5 4.1L4.4 0.2C4.8 -0.2 5.4 -0.2 5.8 0.2L6.2 0.6C6.6 1 6.6 1.6 6.2 2L2.3 5.9Z" fill="#7f9bb1"/></svg>
<span class="t" style="left:35.60px;top:500px;font-size:6.4px;line-height:9px;color:#33383e;font-weight:700;">3</span>
<span class="t" style="left:96.00px;top:500px;font-size:6.7px;line-height:9px;color:#3f93c8;transform:scaleX(0.9393);transform-origin:0 50%;text-decoration:underline;text-decoration-thickness:0.45px;text-underline-offset:0.2px">14</span>
<span class="t" style="left:144.00px;top:500px;font-size:6.5px;line-height:9px;color:#1b1f24;-webkit-text-stroke:0.2px;transform:scaleX(0.9881);transform-origin:0 50%;">5.00</span>
<svg style="left:177.2px;top:500.60px" width="6.2" height="5.6" viewBox="0 0 6.2 5.6"><rect x="0" y="2.4" width="1.5" height="3" fill="#7f9bb1"/><path d="M2 5.4V2.6L3.6 0C4.6 0 4.6 1 4.2 2.2H6C6.3 2.2 6.2 2.8 6.1 3.2L5.5 5C5.4 5.3 5.2 5.4 4.9 5.4Z" fill="#7f9bb1"/></svg>
<svg style="left:191.8px;top:500.80px" width="6.2" height="5.6" viewBox="0 0 6.2 5.6"><g transform="translate(0,5.6) scale(1,-1)"><rect x="0" y="2.4" width="1.5" height="3" fill="#7f9bb1"/><path d="M2 5.4V2.6L3.6 0C4.6 0 4.6 1 4.2 2.2H6C6.3 2.2 6.2 2.8 6.1 3.2L5.5 5C5.4 5.3 5.2 5.4 4.9 5.4Z" fill="#7f9bb1"/></g></svg>
<svg style="left:205.9px;top:500.20px" width="6.6" height="6.6" viewBox="0 0 6.6 6.6"><path d="M1.2 5.4L5.4 1.2" stroke="#7f9bb1" stroke-width="1"/><path d="M3.7 0.3H6.3V2.9Z M0.3 3.7V6.3H2.9Z" fill="#7f9bb1"/></svg>
<svg style="left:220.2px;top:500.40px" width="6.4" height="6.2" viewBox="0 0 6.4 6.2"><path d="M0 6.2L0.5 4.1L4.4 0.2C4.8 -0.2 5.4 -0.2 5.8 0.2L6.2 0.6C6.6 1 6.6 1.6 6.2 2L2.3 5.9Z" fill="#7f9bb1"/></svg>
<pre style="left:246px;top:237.00px;font-size:6.4px;line-height:8.0px;color:#23272c"><span style="background:#e9edf1"><span class="a">*****</span></span> <span style="background:#e9edf1"><span class="a">***</span></span> <span style="background:#e9edf1"><span class="a">*</span></span>";<span style="background:#e9edf1"><span class="a">**</span></span>RecordNumber <span style="background:#e9edf1"><span class="a">*</span></span> <span style="background:#e9edf1"><span class="a">**</span></span>
        SourceName<span style="background:#e9edf1"><span class="a">*</span></span>= <span style="background:#e9edf1"><span class="a">*</span></span>Microsoft-Windows-Security-Auditing"<span style="background:#e9edf1"><span class="a">*</span></span>
        TimeGenerated = "<span style="background:#e9edf1"><span class="a">*</span></span>.<span style="background:#e9edf1"><span class="a">*</span></span>-000";
        TimeWritten =<span style="background:#e9edf1"><span class="a">*</span></span>"<span style="background:#e9edf1"><span class="a">*</span></span>.<span style="background:#e9edf1"><span class="a">*</span></span>-<span style="background:#e9edf1"><span class="a">***</span></span>";<span style="background:#e9edf1"><span class="a">**</span></span>Type = "Audit <span style="background:#e9edf1"><span class="a">*</span></span>";<span style="background:#e9edf1"><span class="a">***</span></span></pre>
<pre style="left:246px;top:277.00px;font-size:6.4px;line-height:8.0px;color:#23272c">instance of Win32_NTLogEvent
{
        Category = 13824;
        CategoryString = "User Account Management";
        ComputerName = "poseidon.sumolab.org";
        EventCode = 4740;
        EventIdentifier = 4740;
        EventType = 4;
        InsertionStrings = {"rishi", "poseidon", "S-1-5-21-276447621-1468245208-3623744024-6071", "S-1-5-18", "AMAZONA-REG4$", "SUMOLAB", "0x3e7"};
        Logfile = "Security";
        Message = "A user account was locked out.
Subject:
        Security ID:            S-1-5-18
        Account Name:           AMAZONA-REG4$
        Account Domain:         SUMOLAB
        Logon ID:               0x3e7
Account That Was Locked Out:
        Security ID:            S-1-5-21-276447621-1468245208-3623744024-6071
        Account Name:           rishi
Additional Information:
        Caller Computer Name:   poseidon";
        RecordNumber = 1518987032;
        SourceName = "Microsoft-Windows-Security-Auditing";
        TimeGenerated = "20130920070241.810584-000";
        TimeWritten = "20130920070241.810584-000";
        Type = "Audit Success";
};</pre>
<pre style="left:246px;top:501.00px;font-size:6.4px;line-height:8.0px;color:#23272c">instance of Win32_NTLogEvent
{
        Category = 13824;
        CategoryString = "User Account Management";
        ComputerName = "poseidon.sumolab.org";
        EventCode = 4740;
        EventIdentifier = 4740;
        EventType = 4;
        InsertionStrings = {"rishi", "poseidon", "S-1-5-21-276447621-1468245208-3623744024-6071", "S-1-5-18", "AMAZONA-REG4$", "SUMOLAB", "0x3e7"};
        Logfile = "Security";</pre>
<svg style="left:1017px;top:173px" width="31" height="421"><rect x="0.75" y="0.60" width="30.00" height="420.00" fill="#eef2f5"/></svg>
</div></div></body></html>
